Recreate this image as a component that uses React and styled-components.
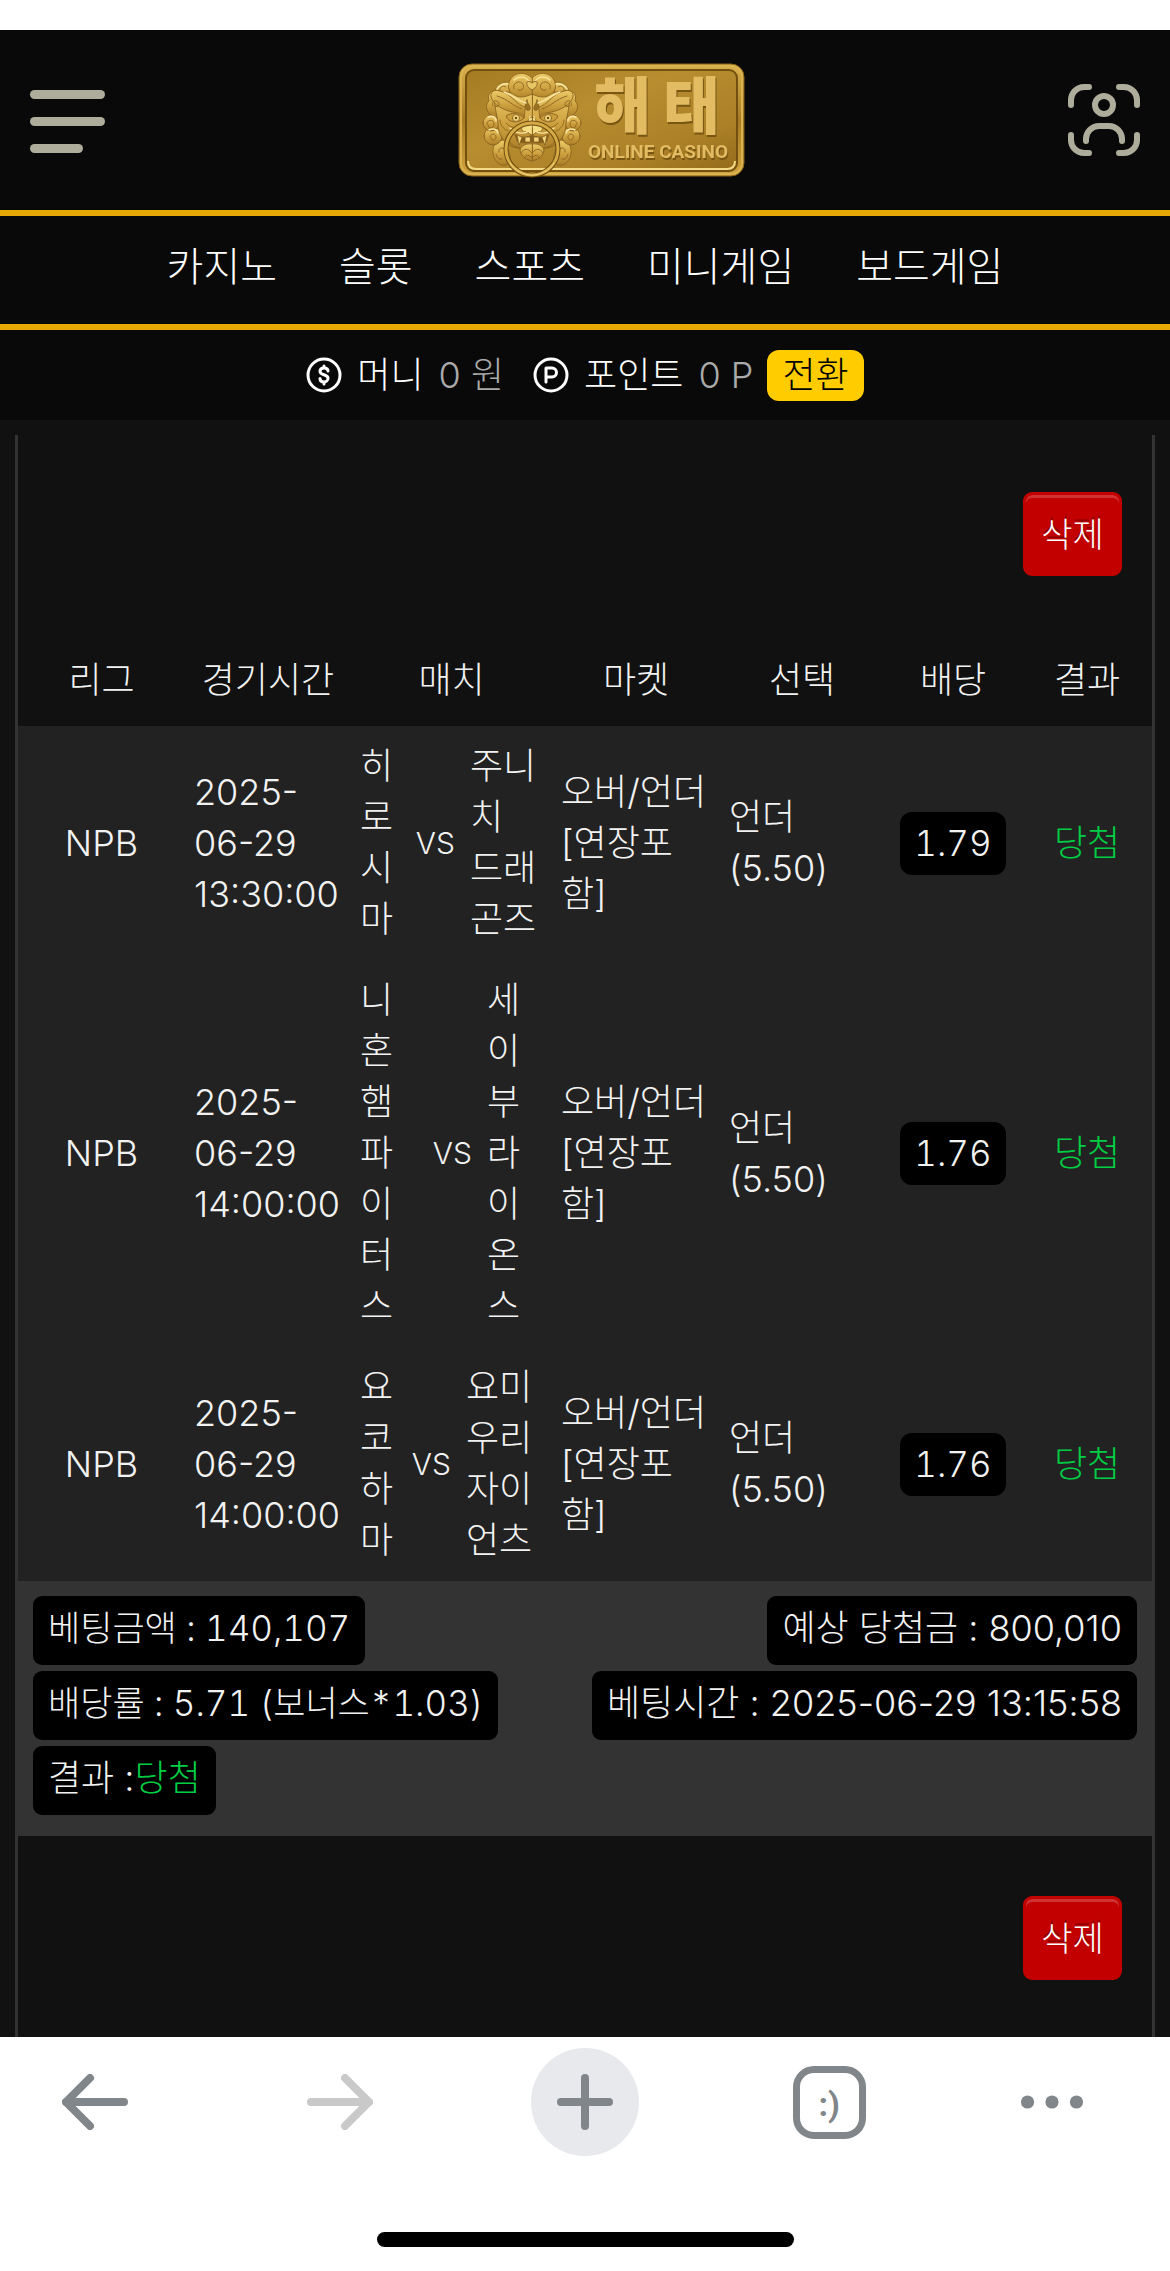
import React from 'react'
import styled, { createGlobalStyle } from 'styled-components'

const GlobalStyle = createGlobalStyle`
  * {
    box-sizing: border-box;
  }

  body {
    margin: 0;
    background-color: #fff;
    color: #f2f2f2;
    font-family: Inter, 'Noto Sans CJK KR', sans-serif;
    font-size: 36px;
    font-weight: 300;
    line-height: 51px;
  }

  button {
    padding: 0;
    border: none;
    background: none;
    color: inherit;
    font: inherit;
    cursor: pointer;
  }
`

const Page = styled.div`
  display: flex;
  flex-direction: column;
  min-height: 100vh;
  padding-top: 30px;
`

const HeaderWrapper = styled.header`
  display: flex;
  justify-content: space-between;
  align-items: center;
  height: 180px;
  padding: 0 30px;
  background-color: #090909;
`

const MenuButton = styled.button`
  display: flex;
  flex-direction: column;
  gap: 18px;
  width: 75px;
  padding-top: 3px;
`

const MenuBar = styled.span`
  width: ${(props) => (props.$short ? '53px' : '100%')};
  height: 9px;
  border-radius: 5px;
  background-color: #aeac9b;
`

const LogoLink = styled.a`
  display: flex;
  margin-left: 30px;
`

const IconButton = styled.button`
  display: flex;
`

const Nav = styled.nav`
  display: flex;
  justify-content: center;
  align-items: center;
  gap: 62px;
  height: 120px;
  padding-bottom: 8px;
  border-top: 6px solid #e6a805;
  border-bottom: 6px solid #e6a805;
  background-color: #090909;
`

const NavLink = styled.a`
  color: #fff;
  font-size: 40px;
  text-decoration: none;
`

const BalanceBar = styled.div`
  display: flex;
  justify-content: center;
  align-items: center;
  gap: 14px;
  height: 90px;
  background-color: #090909;
`

const Balance = styled.div`
  display: flex;
  align-items: center;
  gap: 15px;
  margin-right: ${(props) => (props.$spaced ? '15px' : '0')};
  color: #fff;
`

const BalanceAmount = styled.span`
  color: #aaa;
`

const ConvertButton = styled.button`
  padding: 0 15px;
  border-radius: 12px;
  background-color: #fc0;
  color: #000;
`

const Main = styled.main`
  flex: 1;
  display: flex;
  padding: 15px 15px 0;
  background-color: #111;
`

const Panel = styled.section`
  flex: 1;
  border: solid #333;
  border-width: 0 3px;
`

const PanelActions = styled.div`
  display: flex;
  justify-content: flex-end;
  padding: ${(props) => (props.$last ? '60px' : '57px')} 30px 57px;
`

const DeleteButton = styled.button`
  width: 99px;
  height: 84px;
  border: 3px solid #c30000;
  border-radius: 9px;
  background-color: #c30000;
  box-shadow: inset 0 3px 0 rgba(255, 255, 255, 0.2);
  color: #fff;
  font-size: 34px;
  text-shadow: 0 -3px 0 rgba(0, 0, 0, 0.3);
`

const BetTable = styled.table`
  width: 100%;
  border-collapse: collapse;
  table-layout: fixed;
`

const HeadCell = styled.th`
  width: ${(props) => props.$width};
  padding: 22px 0 20px;
  font-weight: 300;
  text-align: center;
`

const Row = styled.tr`
  background-color: #222;
`

const Cell = styled.td`
  padding: 15px 9px;
  text-align: ${(props) => props.$align || 'left'};
  color: ${(props) => props.$color || 'inherit'};
  white-space: pre-line;
`

const Match = styled.div`
  display: flex;
  align-items: center;
`

const Home = styled.span`
  flex: 1;
`

const TeamName = styled.span`
  display: block;
  width: ${(props) => props.$width};
  word-break: break-all;
  white-space: normal;
`

const Versus = styled.span`
  margin-right: 15px;
  font-size: 30px;
`

const Odds = styled.span`
  display: inline-block;
  padding: 6px 14px;
  border-radius: 12px;
  background-color: #000;
  font-size: 35px;
  font-variant-numeric: tabular-nums;
`

const Summary = styled.div`
  display: flex;
  justify-content: space-between;
  padding: 15px 15px 21px;
  background-color: #333;
`

const SummaryColumn = styled.div`
  display: flex;
  flex-direction: column;
  align-items: ${(props) => props.$align};
  gap: 6px;
`

const Chip = styled.div`
  padding: 7px 15px 11px;
  border-radius: 9px;
  background-color: #000;
  font-size: ${(props) => (props.$tabular ? '35px' : '36px')};
  font-variant-numeric: ${(props) => (props.$tabular ? 'tabular-nums' : 'normal')};
`

const Won = styled.span`
  color: #0c4;
`

const BrowserBar = styled.footer`
  display: flex;
  flex-direction: column;
  align-items: center;
  justify-content: space-between;
  height: 234px;
  padding: 11px 0 24px;
  background-color: #fff;
`

const BrowserActions = styled.div`
  display: flex;
  justify-content: space-between;
  align-items: center;
  width: 100%;
  padding: 0 86px 0 41px;
`

const BrowserButton = styled.button`
  display: flex;
  justify-content: center;
  align-items: center;
  width: ${(props) => (props.$narrow ? '64px' : '108px')};
  height: 108px;
  border-radius: 50%;
  background-color: ${(props) => (props.$filled ? '#e8e9ed' : 'transparent')};
  color: ${(props) => (props.disabled ? '#c9c9c9' : '#80868a')};
`

const TabCount = styled.span`
  display: flex;
  justify-content: center;
  align-items: center;
  width: 73px;
  height: 73px;
  padding-top: 4px;
  border: 7px solid #80868a;
  border-radius: 21px;
  font-family: Roboto, sans-serif;
  font-size: 34px;
  font-weight: 700;
`

const HomeIndicator = styled.div`
  width: 417px;
  height: 15px;
  border-radius: 8px;
  background-color: #000;
`

const menu = ['카지노', '슬롯', '스포츠', '미니게임', '보드게임']

const columns = [
  { label: '리그', width: '167px' },
  { label: '경기시간', width: '166px' },
  { label: '매치', width: '201px' },
  { label: '마켓', width: '168px' },
  { label: '선택', width: '164px' },
  { label: '배당', width: '138px' },
  { label: '결과', width: '130px' },
]

const bets = [
  { time: '2025-\n06-29\n13:30:00', home: '히로시마', away: '주니치 드래곤즈', awayWidth: '73px', odds: '1.79' },
  { time: '2025-\n06-29\n14:00:00', home: '니혼햄 파이터스', away: '세이부 라이온스', awayWidth: '56px', odds: '1.76' },
  { time: '2025-\n06-29\n14:00:00', home: '요코하마', away: '요미우리 자이언츠', awayWidth: '77px', odds: '1.76' },
]

// One side of the guardian face, drawn from its centre line outwards
const GuardianHalf = () => (
  <g stroke="#8a6320" strokeWidth="0.9" strokeLinejoin="round" strokeLinecap="round">
    <g fill="url(#relief)">
      <path d="M28 66c8 0 12 6 11 13-1 8-7 14-13 12-5-2-5-8-3-13z" />
      <circle cx="39" cy="62" r="9" />
      <circle cx="41" cy="49" r="8" />
      <path d="M34 18c8-3 11 3 9 9 4 3 3 10-1 13-4 4-9 5-13 3z" />
      <path d="M20 9c9-3 17 2 17 9 0 6-6 9-11 8z" />
      <path d="M0 4C6-3 18-2 22 6c4 7 0 15-7 17L0 27z" />
      <path d="M0 20c8 4 14 4 19 0 7-4 14-2 17 3 3 7-1 17-2 26 0 12-6 20-15 24L0 77z" />
      <path d="M7 33c8-2 12-11 22-15 7-3 13-2 12 5-2 8-13 13-21 15-6 1-10 1-12 5z" />
    </g>
    <g fill="none">
      <path d="M18 15c2-5-4-9-8-6-4 4 0 9 4 7M32 17c1-4-3-6-6-4M39 32c2-4-2-7-5-4s1 6 3 4" />
      <path d="M45 50c0-5-7-5-7 0s6 5 6 1M42 63c0-4-6-4-6 0s5 4 5 1M33 78c1-4-4-6-6-2M30 85c3 1 6-2 6-5" />
      <path d="M10 35c8-2 14-10 25-13M9 51c6 4 13 3 17-2M24 57c5-2 8-6 8-11" />
      <path d="M24 66c-3 5-8 8-14 8" />
    </g>
    <path d="M8 44c5-5 13-6 18-2-2 7-13 8-18 2z" fill="#c99d3a" />
    <circle cx="16" cy="44" r="3.5" fill="#f4d981" />
    <circle cx="16" cy="44" r="1.2" fill="#6a470e" stroke="none" />
    <path d="M5 26c1 4 3 6 1 9s-5 1-4-2 3-4 3-7z" fill="#9b7021" />
    <path d="M0 43c4 0 4 7 9 9 3 2 1 6-3 6-3 0-4 3-6 3z" fill="#f5dc80" />
    <path d="M0 61c5 3 12 3 17-1l-2 7c-5 2-10 3-15 1z" fill="#7f5a18" />
    <path d="M2 63h5v5H2zM10 63l5-2-2 10z" fill="#f1d47a" />
    <path d="M0 70c6-1 11 2 12 6-1 7-7 10-12 11z" fill="url(#relief)" />
    <path d="M0 79c4-5 8-5 11 0M0 84c3-4 6-3 8 0" fill="none" />
    <path d="M2 42c1 4 0 8-2 11" fill="none" stroke="#fbeaa8" />
    <path
      d="M6 29c8-2 14-8 22-11M3 7c4-5 11-5 15-1M36 47c0-4 4-6 8-4M24 10c4-1 9 1 11 5M34 59c1-4 5-5 9-3M3 57c6 4 14 2 19-3"
      fill="none"
      stroke="#f9e6a0"
      strokeWidth="1.4"
    />
  </g>
)

const LogoText = styled.text`
  font-family: ${(props) => props.$family};
  font-size: ${(props) => props.$size};
  font-weight: ${(props) => props.$weight};
  fill: #e2bb62;
  filter: drop-shadow(1px 2px 0 #795512);
`

const Logo = () => (
  <svg width="288" height="115" viewBox="0 0 288 115" overflow="visible" role="img" aria-label="해태 ONLINE CASINO">
    <defs>
      <linearGradient id="rim" x1="0" y1="0" x2="0" y2="1">
        <stop offset="0" stopColor="#d9b14c" />
        <stop offset="0.5" stopColor="#a87b22" />
        <stop offset="1" stopColor="#d0a33b" />
      </linearGradient>
      <linearGradient id="plate" x1="0" y1="0" x2="1" y2="1">
        <stop offset="0" stopColor="#a57b22" />
        <stop offset="0.4" stopColor="#b88d30" />
        <stop offset="0.75" stopColor="#ab8027" />
        <stop offset="1" stopColor="#946b1b" />
      </linearGradient>
      <linearGradient id="relief" x1="0" y1="0" x2="0" y2="1">
        <stop offset="0" stopColor="#edcb68" />
        <stop offset="0.55" stopColor="#cda03e" />
        <stop offset="1" stopColor="#a97c26" />
      </linearGradient>
    </defs>
    <rect x="1" y="1" width="285" height="112" rx="13" fill="url(#rim)" stroke="#8b641c" />
    <rect x="3" y="3" width="281" height="108" rx="11" fill="none" stroke="#d9b350" strokeWidth="2" />
    <rect x="8" y="7" width="271" height="101" rx="8" fill="url(#plate)" stroke="#73500f" strokeWidth="2" />
    <path d="M10 98q0 8 8 8h251q8 0 8-8" fill="none" stroke="#f4db85" strokeWidth="2" />
    <g transform="translate(74 11)">
      <GuardianHalf />
      <g transform="scale(-1 1)">
        <GuardianHalf />
      </g>
      <path d="M0 9c-6-5-8 3 0 7 8-4 6-12 0-7z" fill="#e8c563" stroke="#8a6320" />
    </g>
    <circle cx="74" cy="86" r="26" fill="none" stroke="#6e4c11" strokeWidth="5" />
    <circle cx="74" cy="86" r="26" fill="none" stroke="#d5aa45" strokeWidth="3" />
    <path d="M52 100a26 26 0 0 0 44 0" fill="none" stroke="#f4da84" />
    <LogoText x="136" y="66" $family="'Noto Sans CJK KR', sans-serif" $size="62px" $weight="900">
      해
    </LogoText>
    <LogoText x="205" y="66" $family="'Noto Sans CJK KR', sans-serif" $size="62px" $weight="900">
      태
    </LogoText>
    <LogoText x="130" y="95" $family="Roboto, sans-serif" $size="19px" $weight="700">
      ONLINE CASINO
    </LogoText>
  </svg>
)

const ProfileIcon = () => (
  <svg width="72" height="72" viewBox="0 0 72 72" fill="none" stroke="#aeac9b" strokeWidth="6" strokeLinecap="round">
    <path d="M3 21v-5A13 13 0 0 1 16 3h5M51 3h5a13 13 0 0 1 13 13v5M69 51v5a13 13 0 0 1-13 13h-5M21 69h-5A13 13 0 0 1 3 56v-5" />
    <circle cx="36" cy="21" r="9" />
    <path d="M18 57v-2a13 13 0 0 1 13-13h10a13 13 0 0 1 13 13v2" />
  </svg>
)

const MoneyIcon = () => (
  <svg width="36" height="36" viewBox="0 0 36 36" fill="none" stroke="#fff" strokeWidth="3" strokeLinecap="round">
    <circle cx="18" cy="18" r="16" />
    <path d="M22 14c0-2-2-3-4-3s-4 1-4 3.500c0 4 8 2.500 8 6.500 0 2.500-2 4-4 4s-4-1-4-3.500M18 9v2M18 25v2" />
  </svg>
)

const PointIcon = () => (
  <svg width="36" height="36" viewBox="0 0 36 36" fill="none" stroke="#fff" strokeWidth="3" strokeLinecap="round" strokeLinejoin="round">
    <circle cx="18" cy="18" r="16" />
    <path d="M13 25V11h6a4.500 4.500 0 0 1 0 9h-6" />
  </svg>
)

const ArrowIcon = ({ forward }) => (
  <svg width="66" height="56" viewBox="0 0 66 56" fill="none" stroke="currentColor" strokeWidth="8" strokeLinecap="round" strokeLinejoin="round">
    <path d={forward ? 'M4 28h58M38 4l24 24-24 24' : 'M62 28H4M28 4L4 28l24 24'} />
  </svg>
)

const PlusIcon = () => (
  <svg width="56" height="56" viewBox="0 0 56 56" stroke="currentColor" strokeWidth="8" strokeLinecap="round">
    <path d="M28 4v48M4 28h48" />
  </svg>
)

const MoreIcon = () => (
  <svg width="68" height="16" viewBox="0 0 68 16" fill="currentColor">
    <circle cx="8" cy="8" r="7" />
    <circle cx="34" cy="8" r="7" />
    <circle cx="60" cy="8" r="7" />
  </svg>
)

const Header = () => {
  return (
    <HeaderWrapper>
      <MenuButton aria-label="메뉴">
        <MenuBar />
        <MenuBar />
        <MenuBar $short />
      </MenuButton>
      <LogoLink href="#">
        <Logo />
      </LogoLink>
      <IconButton aria-label="내 정보">
        <ProfileIcon />
      </IconButton>
    </HeaderWrapper>
  )
}

const BetHistory = () => {
  return (
    <BetTable>
      <thead>
        <tr>
          {columns.map((column) => (
            <HeadCell key={column.label} $width={column.width} scope="col">
              {column.label}
            </HeadCell>
          ))}
        </tr>
      </thead>
      <tbody>
        {bets.map((bet) => (
          <Row key={bet.home}>
            <Cell $align="center">NPB</Cell>
            <Cell>{bet.time}</Cell>
            <Cell>
              <Match>
                <Home>
                  <TeamName $width="36px">{bet.home}</TeamName>
                </Home>
                <Versus>VS</Versus>
                <TeamName $width={bet.awayWidth}>{bet.away}</TeamName>
              </Match>
            </Cell>
            <Cell>{'오버/언더\n[연장포\n함]'}</Cell>
            <Cell>{'언더\n(5.50)'}</Cell>
            <Cell $align="center">
              <Odds>{bet.odds}</Odds>
            </Cell>
            <Cell $align="center" $color="#0c4">
              당첨
            </Cell>
          </Row>
        ))}
      </tbody>
    </BetTable>
  )
}

const App = () => {
  return (
    <Page>
      <GlobalStyle />
      <Header />
      <Nav>
        {menu.map((item) => (
          <NavLink key={item} href="#">
            {item}
          </NavLink>
        ))}
      </Nav>
      <BalanceBar>
        <Balance $spaced>
          <MoneyIcon />
          <span>머니</span>
          <BalanceAmount>0 원</BalanceAmount>
        </Balance>
        <Balance>
          <PointIcon />
          <span>포인트</span>
          <BalanceAmount>0 P</BalanceAmount>
        </Balance>
        <ConvertButton>전환</ConvertButton>
      </BalanceBar>
      <Main>
        <Panel>
          <PanelActions>
            <DeleteButton>삭제</DeleteButton>
          </PanelActions>
          <BetHistory />
          <Summary>
            <SummaryColumn $align="flex-start">
              <Chip $tabular>베팅금액 : 140,107</Chip>
              <Chip $tabular>배당률 : 5.71 (보너스*1.03)</Chip>
              <Chip>
                결과 :<Won>당첨</Won>
              </Chip>
            </SummaryColumn>
            <SummaryColumn $align="flex-end">
              <Chip>예상 당첨금 : 800,010</Chip>
              <Chip>베팅시간 : 2025-06-29 13:15:58</Chip>
            </SummaryColumn>
          </Summary>
          <PanelActions $last>
            <DeleteButton>삭제</DeleteButton>
          </PanelActions>
        </Panel>
      </Main>
      <BrowserBar>
        <BrowserActions>
          <BrowserButton aria-label="뒤로">
            <ArrowIcon />
          </BrowserButton>
          <BrowserButton aria-label="앞으로" disabled>
            <ArrowIcon forward />
          </BrowserButton>
          <BrowserButton aria-label="새 탭" $filled>
            <PlusIcon />
          </BrowserButton>
          <BrowserButton>
            <TabCount>:)</TabCount>
          </BrowserButton>
          <BrowserButton aria-label="더보기" $narrow>
            <MoreIcon />
          </BrowserButton>
        </BrowserActions>
        <HomeIndicator />
      </BrowserBar>
    </Page>
  )
}

export default App
